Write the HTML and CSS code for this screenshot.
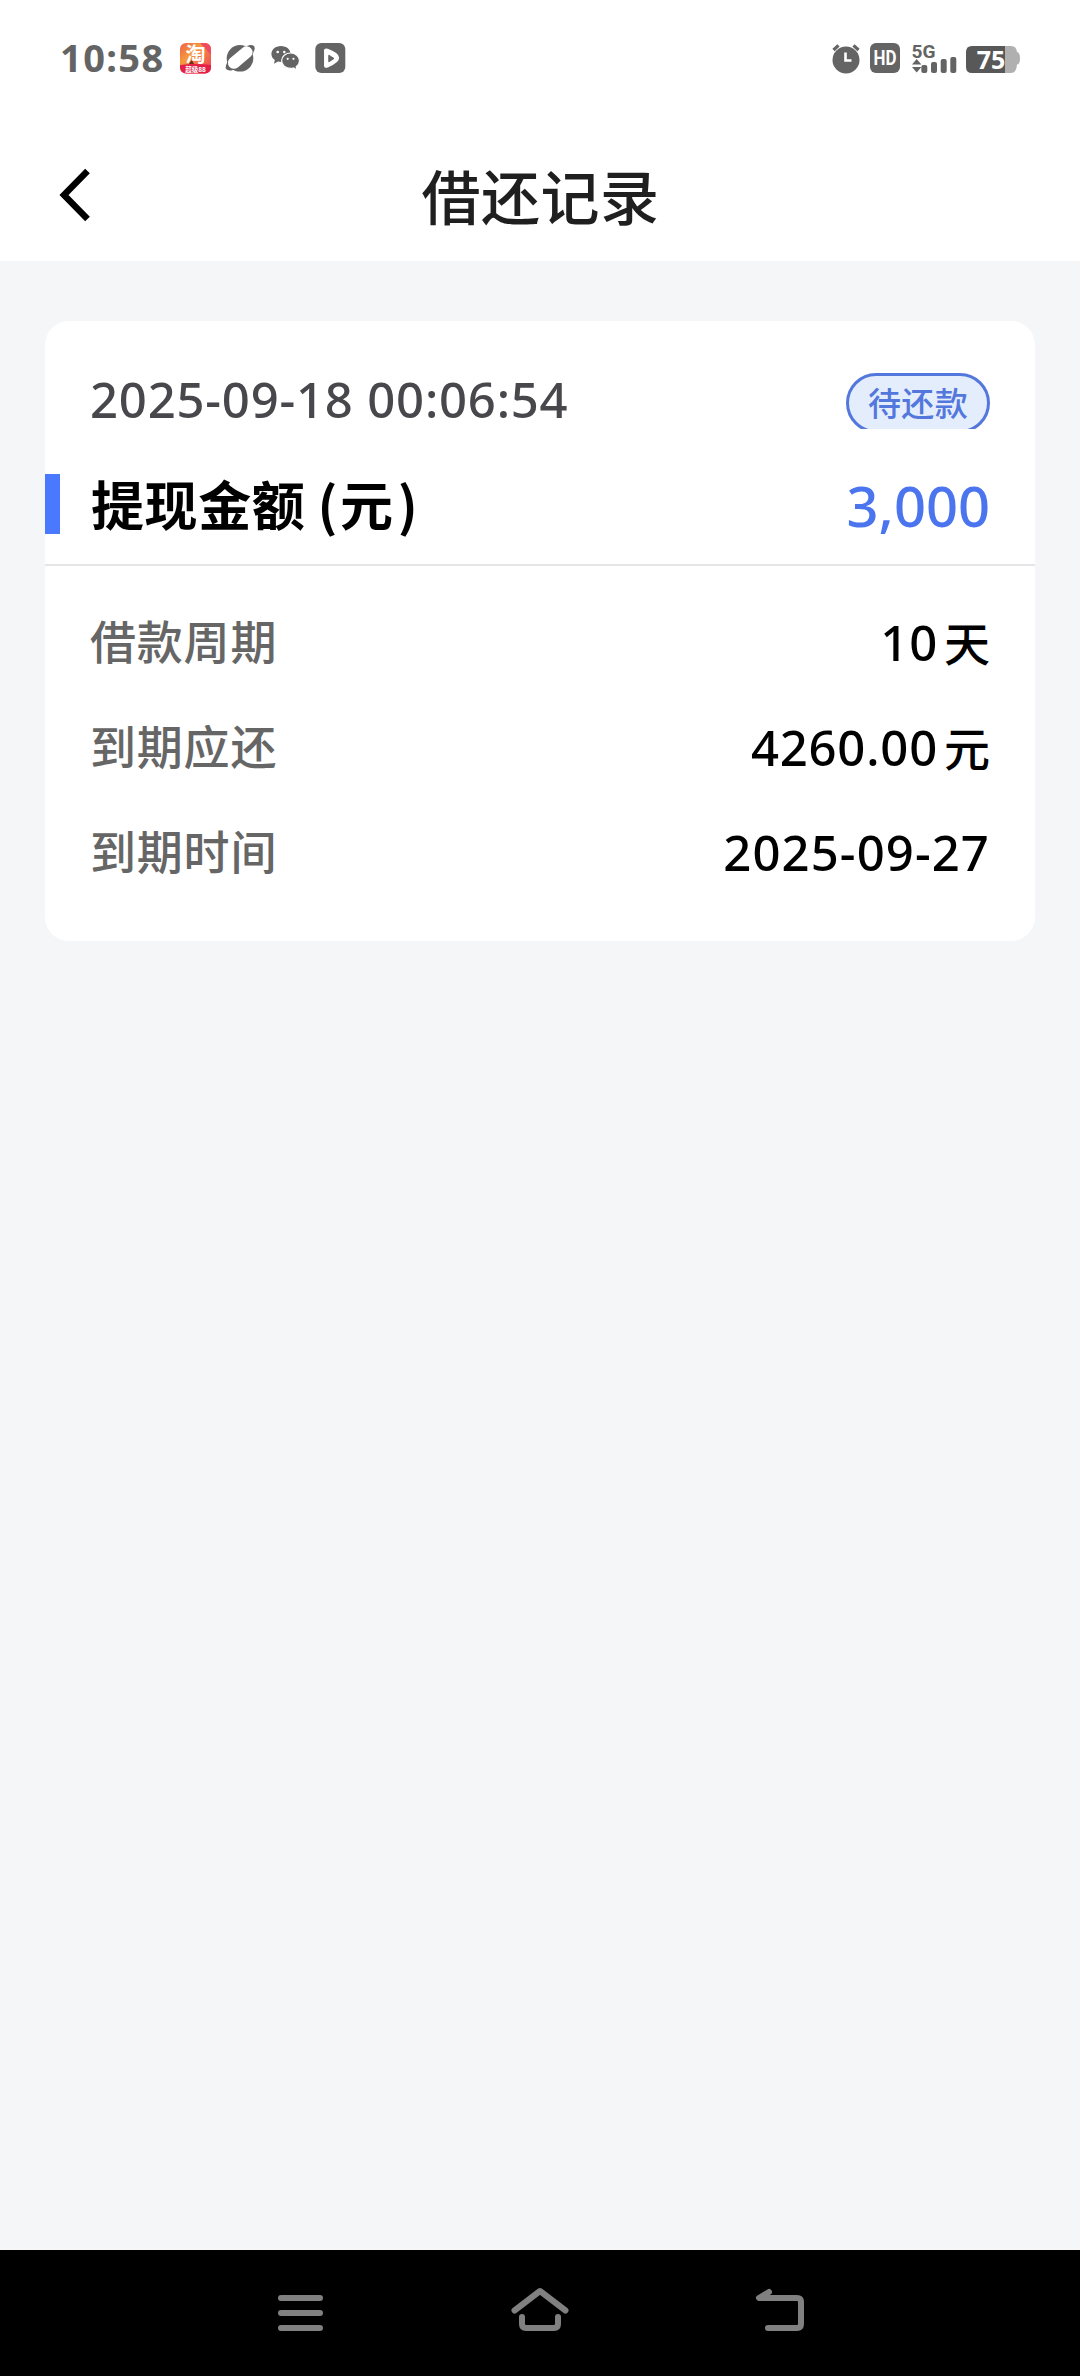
FILE: index.html
```html
<!DOCTYPE html>
<html lang="zh-CN">
<head>
<meta charset="utf-8">
<title>借还记录</title>
<link rel="stylesheet" href="styles.css">
</head>
<body>
<div class="screen">
  <div class="status">
    <span class="time">10:58</span>
    <div class="status-left">
      <svg class="icon" width="31" height="31" viewBox="0 0 31 31">
        <defs>
          <linearGradient id="tb" x1="0" y1="0" x2="1" y2="1">
            <stop offset="0" stop-color="#f0604a"/><stop offset=".35" stop-color="#f59a3c"/><stop offset="1" stop-color="#ee3a5c"/>
          </linearGradient>
          <clipPath id="tbc"><rect width="31" height="30.500" rx="6"/></clipPath>
        </defs>
        <g clip-path="url(#tbc)">
          <rect width="31" height="31" fill="url(#tb)"/>
          <path d="M20 0h11v12z" fill="#ee4a62"/>
          <path d="M0 22Q15 20 31 22V31H0z" fill="#e51f48"/>
          <path d="M8 21l4-4 2 4z" fill="#7a2a1c"/>
        </g>
        <text x="15.500" y="19" class="tb-main">淘</text>
        <text x="15.500" y="29" class="tb-sub">超级88</text>
      </svg>
      <svg class="icon" width="32" height="31" viewBox="0 0 32 31">
        <circle cx="15" cy="15.300" r="13.300" fill="#646464"/>
        <ellipse cx="15.200" cy="14.800" rx="18" ry="6.800" transform="rotate(-40 15.200 14.800)" fill="#646464"/>
        <rect x="1" y="8.600" width="28.500" height="12" rx="6" transform="rotate(-40 15.200 14.600)" fill="#fff"/>
      </svg>
      <svg class="icon" width="29" height="31" viewBox="0 0 29 31">
        <path d="M10 3C4.500 3 .4 6.600.4 11c0 2.500 1.300 4.600 3.400 6.100L3 20.800l4-2.200c1 .3 2 .4 3 .4 5.500 0 9.600-3.600 9.600-8S15.500 3 10 3z" fill="#646464"/>
        <path d="M19.600 10c-5 0-9 3.400-9 7.700s4 7.700 9 7.700c1 0 2-.2 2.800-.4l3.600 2-.8-3.300c2-1.400 3.300-3.500 3.300-6 0-4.300-4-7.700-8.900-7.700z" fill="#646464" stroke="#fff" stroke-width="1.200"/>
        <g fill="#fff"><circle cx="6.700" cy="9" r="1.300"/><circle cx="13.300" cy="9" r="1.300"/><circle cx="16.700" cy="15.800" r="1.100"/><circle cx="22.500" cy="15.800" r="1.100"/></g>
      </svg>
      <svg class="icon play" width="31" height="31" viewBox="0 0 31 31">
        <rect x=".3" width="30" height="30" rx="6" fill="#646464"/>
        <path d="M10.300 8.500q-.8-2.300 2-1.500Q22 10.500 22.800 14.500t-10.500 8.800q-2.800.7-2-1.800z" fill="#fff" stroke="#fff" stroke-width="2.500" stroke-linejoin="round"/>
        <path d="M13.800 12.200v6.600l5.200-3.300z" fill="#646464" stroke="#646464" stroke-linejoin="round"/>
      </svg>
    </div>
    <div class="status-right">
      <svg class="icon" width="30" height="31" viewBox="0 0 30 31">
        <circle cx="15" cy="17" r="13.500" fill="#646464"/>
        <path d="M2.500 7l5-4.700M27.500 7l-5-4.700" stroke="#646464" stroke-width="3.200"/>
        <path d="M14.500 9.500v8h6" fill="none" stroke="#fff" stroke-width="2.600"/>
      </svg>
      <svg class="icon" width="30" height="31" viewBox="0 0 30 31">
        <rect width="30" height="30" rx="6" fill="#646464"/>
        <text x="15" y="22" class="hd" textLength="23" lengthAdjust="spacingAndGlyphs">HD</text>
      </svg>
      <svg class="icon signal" width="45" height="31" viewBox="0 0 45 31">
        <text x="-.5" y="14.500" class="fiveg" textLength="24" lengthAdjust="spacingAndGlyphs">5G</text>
        <path d="M0 21.500L4.700 16l4.700 5.500zM0 24l4.700 5.500L9.400 24z" fill="#646464"/>
        <g fill="#646464"><rect x="9.300" y="22" width="6" height="8" rx="2"/><rect x="19" y="19" width="6" height="11" rx="2"/><rect x="28.700" y="16" width="6" height="14" rx="2"/><rect x="38.300" y="14" width="6" height="16" rx="2"/></g>
      </svg>
      <svg class="icon battery" width="54" height="31" viewBox="0 0 54 31">
        <path d="M38 3h7q5.500 0 6 6 3 .5 3 6.500t-3 6q-.5 8.500-6 8.500h-7z" fill="#b0b0b0"/>
        <path d="M6 3h33v27H6q-6 0-6-6V9q0-6 6-6z" fill="#585858"/>
        <text x="25" y="26" class="level">75</text>
      </svg>
    </div>
  </div>
  <header class="header">
    <svg class="back" width="32" height="54" viewBox="0 0 32 54"><path d="M29.500 3L6 27l23.500 24" fill="none" stroke="#000" stroke-width="6.500"/></svg>
    <h1 class="title">借还记录</h1>
  </header>
  <main class="content">
    <section class="card">
      <div class="top">
        <span class="date">2025-09-18 00:06:54</span>
        <div class="badge-wrap"><span class="badge">待还款</span></div>
      </div>
      <div class="amount-row">
        <span class="amount-label">提现金额<span class="paren">(</span>元<span class="paren close">)</span></span>
        <span class="amount">3,000</span>
      </div>
      <div class="details">
        <div class="row"><span class="label">借款周期</span><span class="value">10<span class="unit">天</span></span></div>
        <div class="row"><span class="label">到期应还</span><span class="value">4260.00<span class="unit">元</span></span></div>
        <div class="row"><span class="label">到期时间</span><span class="value due">2025-09-27</span></div>
      </div>
    </section>
  </main>
  <nav class="nav">
    <svg width="240" height="126" viewBox="180 0 240 126"><path d="M281 48h39M281 63h39M281 78h39" stroke="#808080" stroke-width="6" stroke-linecap="round"/></svg>
    <svg width="240" height="126" viewBox="420 0 240 126"><path d="M514.500 60.500L540 41l25.500 19.500M522 67v7q0 4 4 4h28q4 0 4-4v-7" fill="none" stroke="#808080" stroke-width="6" stroke-linecap="round" stroke-linejoin="round"/></svg>
    <svg width="240" height="126" viewBox="660 0 240 126"><path d="M769 42L759 48H797q4 0 4 4V74q0 4-4 4H768" fill="none" stroke="#808080" stroke-width="6" stroke-linecap="round" stroke-linejoin="round"/></svg>
  </nav>
</div>
</body>
</html>
```
FILE: styles.css
```css
* { box-sizing: border-box; }
body {
  margin: 0;
  font-family: "Noto Sans", "Noto Sans CJK SC", sans-serif;
  background: #f4f6f8;
}
.screen { width: 1080px; height: 2376px; display: flex; flex-direction: column; background: #f4f6f8; }
svg { display: block; flex: none; overflow: visible; }

.status { height: 100px; padding: 43px 60px 0; display: flex; align-items: flex-start; background: #fff; color: #646464; }
.time { width: 120px; margin-top: -1px; line-height: 30px; font-size: 38px; font-weight: 700; letter-spacing: 1.4px; }
.status-left { display: flex; gap: 14px; }
.play { margin-left: 1px; }
.status-right { display: flex; margin-left: auto; gap: 9px; }
.signal { margin-left: 3px; }
.tb-main { font: 700 20px "Noto Sans CJK SC", sans-serif; fill: #fff; text-anchor: middle; }
.tb-sub { font: 700 6.5px "Noto Sans CJK SC", sans-serif; fill: #fff; text-anchor: middle; }
.hd { font: 700 20px Roboto, sans-serif; fill: #fff; text-anchor: middle; }
.fiveg { font: 700 19px Roboto, sans-serif; fill: #646464; }
.level { font: 700 25px "Noto Sans", sans-serif; fill: #fff; text-anchor: middle; }

.header { height: 161px; padding: 0 58px; display: grid; grid-template-columns: 60px 1fr 60px; align-items: center; background: #fff; }
.back { margin-top: 28px; }
.title { margin: 28px 0 0 1px; text-align: center; font-family: "Noto Sans CJK SC", sans-serif; font-size: 59px; line-height: 72px; font-weight: 500; letter-spacing: .5px; color: #1f1f1f; }

.content { flex: 1; padding: 60px 45px; }
.card { height: 620px; border-radius: 24px; background: #fff; }
.top { height: 153px; padding: 52px 45px 0; display: flex; justify-content: space-between; align-items: flex-start; }
.date { margin-top: -2px; font-size: 49px; line-height: 56px; font-weight: 500; letter-spacing: .8px; color: #47474c; }
.badge-wrap { height: 56px; overflow: hidden; }
.badge { display: block; width: 144px; height: 60px; border: 3px solid #5377dc; border-radius: 30px; background: #e4edfc; color: #5377dc; text-align: center; font-family: "Noto Sans CJK SC", sans-serif; font-size: 33px; line-height: 53px; font-weight: 500; letter-spacing: .4px; }
.amount-row { height: 60px; border-left: 15px solid #4a78ff; padding: 0 45px 0 31px; display: flex; justify-content: space-between; align-items: center; }
.amount-label { margin-top: -2px; font-family: "Noto Sans CJK SC", sans-serif; font-size: 53px; line-height: 60px; font-weight: 700; letter-spacing: .6px; color: #000; white-space: nowrap; }
.paren { margin: 0 2px 0 12px; }
.close { margin: 0 0 0 4px; }
.amount { margin-top: 2px; font-size: 56px; line-height: 60px; font-weight: 500; color: #4b75ee; }
.details { margin-top: 30px; border-top: 2px solid #e6e6e8; padding: 25px 45px 0; }
.row { height: 105px; display: flex; justify-content: space-between; align-items: center; }
.label { margin-top: -9px; font-family: "Noto Sans CJK SC", sans-serif; font-size: 46px; line-height: 60px; font-weight: 500; letter-spacing: .8px; color: #666; }
.value { margin-top: -4px; font-size: 49px; line-height: 60px; font-weight: 500; letter-spacing: .8px; color: #000; }
.due { letter-spacing: 1.1px; }
.unit { margin-left: 6px; font-family: "Noto Sans CJK SC", sans-serif; font-size: 46px; line-height: 1; letter-spacing: 0; }

.nav { height: 126px; display: flex; justify-content: center; background: #000; }
```
